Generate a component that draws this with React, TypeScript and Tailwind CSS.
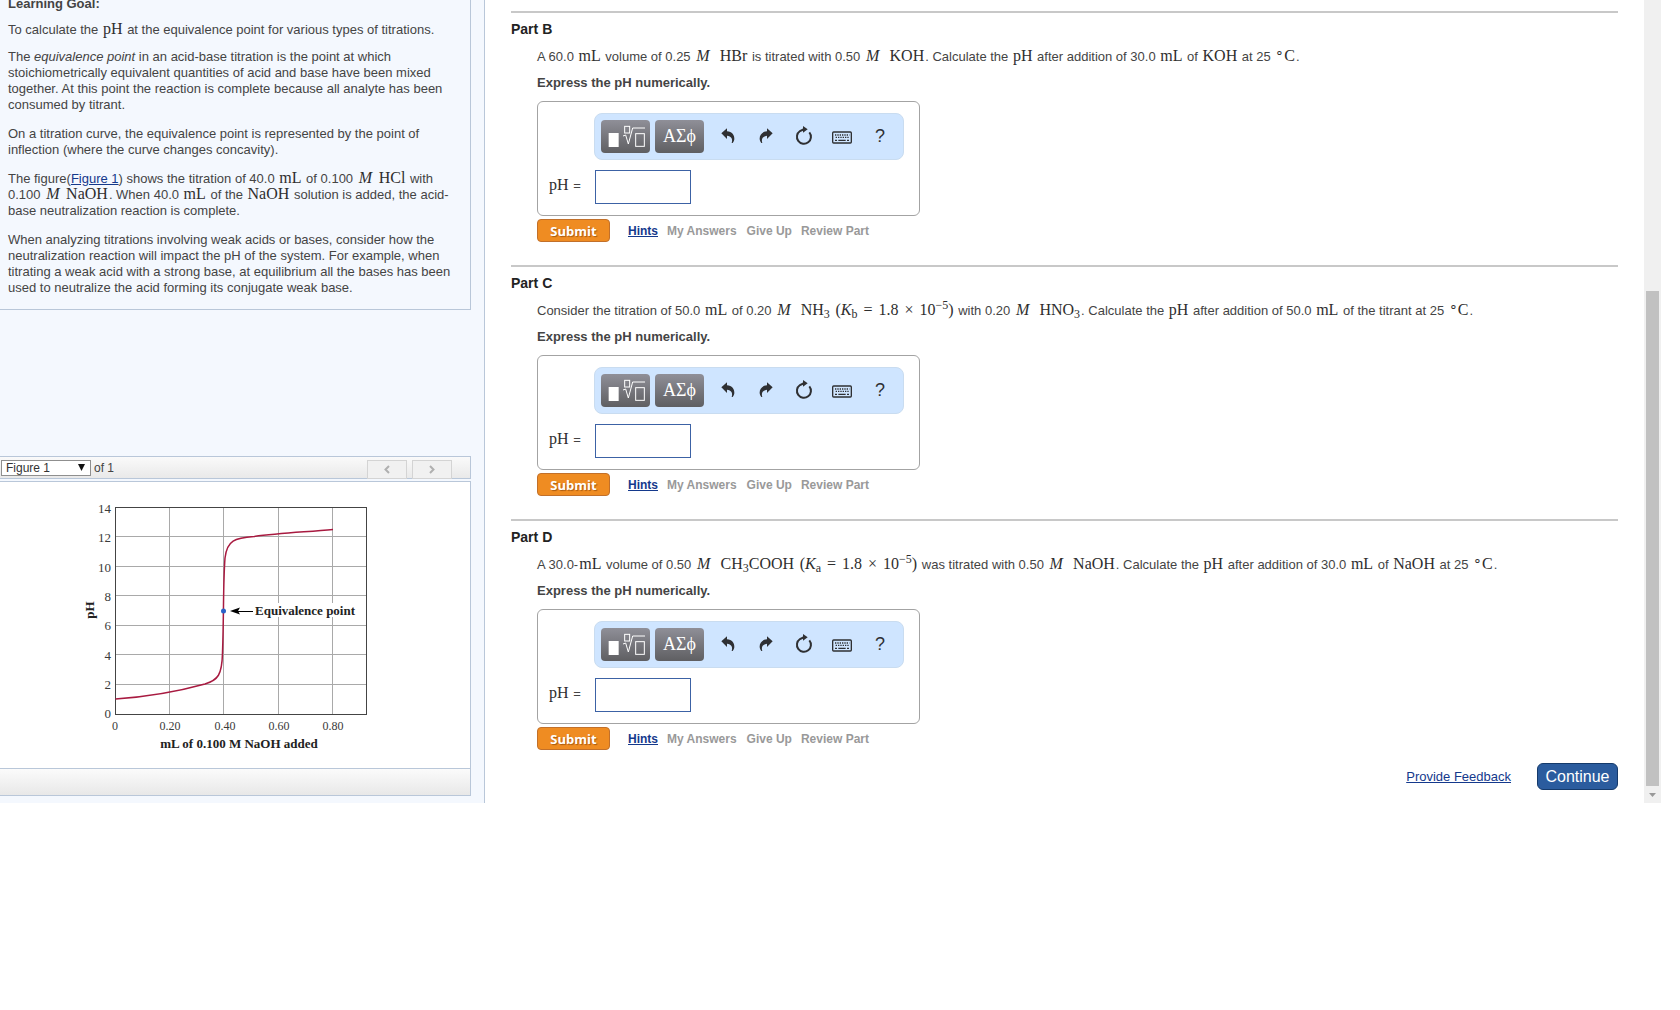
import React from "react";

type Kids = { children: React.ReactNode };

const M = ({ children }: Kids) => (
  <span className="mx-px font-['Liberation_Serif',serif] text-[16px] leading-3 text-[#2e2e2e]">{children}</span>
);
const I = ({ children }: Kids) => (
  <i className="mx-[2px] font-['Liberation_Serif',serif] text-[16px] leading-3 text-[#2e2e2e]">{children}</i>
);
const Sub = ({ children }: Kids) => (
  <sub className="bottom-[-3px] text-[12px] leading-none">{children}</sub>
);
const Sup = ({ children }: Kids) => (
  <sup className="top-[-6px] text-[12px] leading-none">{children}</sup>
);
const Op = ({ children }: Kids) => <span className="mx-[2px]">{children}</span>;
const Celsius = () => (
  <M>
    <sup className="top-[-4px] text-[14px] leading-none">∘</sup>C
  </M>
);

const TemplateIcon = () => (
  <svg width="38" height="24" viewBox="0 0 114 72" fill="none" stroke="#fff" strokeWidth="3" aria-hidden="true">
    <rect x="5" y="27" width="30" height="42" fill="#fff" stroke="none" />
    <rect x="53" y="7" width="15" height="20" />
    <path d="M48 36l8-3 8 27 13-48h37" />
    <rect x="86" y="29" width="26" height="38" />
  </svg>
);
const UndoIcon = () => (
  <svg width="14" height="16" viewBox="0 0 42 48" fill="#2f3033" aria-hidden="true">
    <path d="M1 16L18 1v9c15 1 23 12 22 24-1 5-3 9-5 11h-3c4-12-1-21-14-22v10z" />
  </svg>
);
const RedoIcon = () => (
  <svg width="14" height="16" viewBox="0 0 42 48" fill="#2f3033" aria-hidden="true">
    <path d="M41 16L24 1v9C9 11 1 22 2 34c1 5 3 9 5 11h3C6 33 11 24 24 23v10z" />
  </svg>
);
const ResetIcon = () => (
  <svg width="18" height="20" viewBox="0 0 54 60" aria-hidden="true">
    <path d="M43 19A21 21 0 1 1 15 15L28 9" fill="none" stroke="#2f3033" strokeWidth="6" />
    <path d="M24 0l14 10-14 10z" fill="#2f3033" />
  </svg>
);
const KeyboardIcon = () => (
  <svg width="20" height="13" viewBox="0 0 60 39" fill="none" stroke="#2f3033" className="mt-[4px]" aria-hidden="true">
    <rect x="2" y="3" width="56" height="33" rx="3" strokeWidth="4" />
    <path d="M9 12h43M11 19h40" strokeWidth="4" strokeDasharray="4 3" />
    <path d="M9 28h6M19 28h22M45 28h6" strokeWidth="4" />
  </svg>
);

const Tool = ({ label, children }: Kids & { label: string }) => (
  <button type="button" aria-label={label} className="flex h-full w-[38px] items-center justify-center pb-[2px]">
    {children}
  </button>
);
const DarkTool = ({ label, children }: Kids & { label: string }) => (
  <button
    type="button"
    aria-label={label}
    className="flex h-[33px] w-[49px] items-center justify-center rounded bg-linear-to-b from-[#8f8f98] to-[#5f5f62] pb-[2px] font-['Liberation_Serif',serif] text-[18px] text-white"
  >
    {children}
  </button>
);

function Part({ id, children }: Kids & { id: string }) {
  const field = "answer-" + id;
  return (
    <section className="mb-[23px] border-t-2 border-[#c8c8c8]">
      <h2 className="mt-[8px] text-[14px] leading-4 font-bold text-[#222]">Part {id}</h2>
      <div className="pl-[26px]">
        <p className="mt-[12px] h-4 whitespace-nowrap">{children}</p>
        <p className="mt-[10px] font-bold">Express the pH numerically.</p>
        <div className="mt-[10px] w-[383px] rounded-md border border-[#a3a3a3] pt-[11px] pb-[11px] pl-[56px]">
          <div role="toolbar" className="flex h-[47px] w-[310px] items-center rounded-lg border border-[#c9dcf0] bg-[#cfe5ff] pl-[6px]">
            <div className="flex gap-[5px] pr-[5px]">
              <DarkTool label="Templates">
                <TemplateIcon />
              </DarkTool>
              <DarkTool label="Symbols">ΑΣϕ</DarkTool>
            </div>
            <Tool label="Undo"><UndoIcon /></Tool>
            <Tool label="Redo"><RedoIcon /></Tool>
            <Tool label="Reset"><ResetIcon /></Tool>
            <Tool label="Keyboard"><KeyboardIcon /></Tool>
            <Tool label="Help"><span className="text-[18px] text-[#2f3033]">?</span></Tool>
          </div>
          <div className="-ml-[46px] mt-[10px] flex items-center">
            <label htmlFor={field} className="w-[47px] pb-[3px]">
              <M>pH</M> =
            </label>
            <input id={field} type="text" className="h-[34px] w-[96px] border border-[#3c62a5] bg-white px-2 text-[14px]" />
          </div>
        </div>
        <div className="mt-[3px] flex items-center text-[12px] font-bold text-[#999]">
          <button
            type="button"
            className="h-[23px] w-[73px] rounded border border-[#c2702a] bg-[#ef8c22] font-['Open_Sans',sans-serif] text-[13px] font-bold text-white [text-shadow:1px_1px_1px_#a85a10]"
          >
            Submit
          </button>
          <a href="#hints" className="ml-[18px] text-[#14398c] underline">Hints</a>
          <span className="ml-[9px]">My Answers</span>
          <span className="ml-[10px]">Give Up</span>
          <span className="ml-[9px]">Review Part</span>
        </div>
      </div>
    </section>
  );
}

const xs = [169.5, 223.5, 278.5, 332.5];
const ys = [536.5, 566.5, 595.5, 625.5, 654.5, 684.5];
const yLabels: [string, number][] = [["14", 513], ["12", 542], ["10", 572], ["8", 601], ["6", 630], ["4", 660], ["2", 689], ["0", 718]];
const xLabels: [string, number][] = [["0", 115], ["0.20", 170], ["0.40", 225], ["0.60", 279], ["0.80", 333]];

const Chart = () => (
  <svg width="300" height="264" viewBox="76 492 300 264" role="img" aria-label="Titration curve" className="font-['Liberation_Serif',serif]" fill="#3a3a3a">
    <g stroke="#a9a9a9">
      {xs.map((x) => <path key={x} d={`M${x} 508V714`} />)}
      {ys.map((y) => <path key={y} d={`M116 ${y}H366`} />)}
    </g>
    <rect x="115.5" y="507.5" width="251" height="207" fill="none" stroke="#444" />
    <path d="M278.500 603v14M332.500 603v14" stroke="#fff" strokeWidth="3" />
    <path d="M115.500 699C145 697 176 692 205 684C218 680 222 675 222.500 653C224 610 223 585 225 558C227 540 235 538 254 536.500C280 533 306 532 333 529.500" fill="none" stroke="#a81a40" strokeWidth="1.500" />
    <circle cx="223.500" cy="611" r="2.500" fill="#2a62c8" />
    <path d="M230 611l10-3.500-2 3.500 2 3.500z" fill="#000" />
    <path d="M237 611.500h16" stroke="#000" />
    <g fontSize="13">
      {yLabels.map(([t, y]) => <text key={t} x="111" y={y} textAnchor="end">{t}</text>)}
      {xLabels.map(([t, x]) => <text key={t} x={x} y="730" fontSize="12" textAnchor="middle">{t}</text>)}
    </g>
    <g fontWeight="bold" fill="#222" fontSize="13">
      <text x="255" y="615">Equivalence point</text>
      <text x="239" y="748" textAnchor="middle">mL of 0.100 M NaOH added</text>
      <text transform="translate(94 610) rotate(-90)" textAnchor="middle">pH</text>
    </g>
  </svg>
);

const NavButton = ({ label, d }: { label: string; d: string }) => (
  <button type="button" aria-label={label} className="flex h-[19px] w-[40px] items-center justify-center border border-[#d4d4d4] bg-[#f1f1f1]">
    <svg width="6" height="9" viewBox="0 0 6 9" fill="none" stroke="#b0b0b0" strokeWidth="2" aria-hidden="true">
      <path d={d} />
    </svg>
  </button>
);

export default function App() {
  return (
    <div className="min-h-screen overflow-hidden bg-white font-['Liberation_Sans',Arial,sans-serif] text-[13px] leading-4 text-[#444]">
      <div className="mr-[19px] flex">
        <aside className="w-[485px] shrink-0 border-r border-[#b9c7d9] bg-[#f4f8fe] pr-[13px] pb-[7px]">
          <div className="-mt-1 h-[314px] border-r border-b border-[#b9c7d9] pl-2 whitespace-nowrap">
            <h1 className="font-bold">Learning Goal:</h1>
            <p className="mt-[10px]">To calculate the <M>pH</M> at the equivalence point for various types of titrations.</p>
            <p className="mt-[11px]">
              The <i>equivalence point</i> in an acid-base titration is the point at which<br />
              stoichiometrically equivalent quantities of acid and base have been mixed<br />
              together. At this point the reaction is complete because all analyte has been<br />
              consumed by titrant.
            </p>
            <p className="mt-[13px]">
              On a titration curve, the equivalence point is represented by the point of<br />
              inflection (where the curve changes concavity).
            </p>
            <p className="mt-[13px]">
              The figure(<a href="#figure" className="text-[#14398c] underline">Figure 1</a>) shows the titration of 40.0 <M>mL</M> of 0.100 <I>M</I> <M>HCl</M> with<br />
              0.100 <I>M</I> <M>NaOH</M>. When 40.0 <M>mL</M> of the <M>NaOH</M> solution is added, the acid-<br />
              base neutralization reaction is complete.
            </p>
            <p className="mt-[13px]">
              When analyzing titrations involving weak acids or bases, consider how the<br />
              neutralization reaction will impact the pH of the system. For example, when<br />
              titrating a weak acid with a strong base, at equilibrium all the bases has been<br />
              used to neutralize the acid forming its conjugate weak base.
            </p>
          </div>
          <div className="mt-[146px] flex h-[23px] items-center border-y border-r border-[#b9c7d9] bg-linear-to-b from-[#fafafa] to-[#e9e9e9] pr-[18px] pl-px">
            <div className="relative">
              <select aria-label="Figure" className="block h-4 w-[90px] appearance-none border border-[#8f8f8f] bg-white pl-1 text-[12px] leading-[14px] text-[#333]">
                <option>Figure 1</option>
              </select>
              <svg width="7" height="7" viewBox="0 0 7 7" className="pointer-events-none absolute top-1 right-1.5" aria-hidden="true">
                <path d="M0 0h7L3.500 7z" fill="#111" />
              </svg>
            </div>
            <span className="ml-[3px] text-[12px]">of 1</span>
            <div className="mt-[3px] ml-auto flex gap-[5px]">
              <NavButton label="Previous figure" d="M5 1L1.500 4.500L5 8" />
              <NavButton label="Next figure" d="M1 1L4.500 4.500L1 8" />
            </div>
          </div>
          <div className="mt-[2px] border border-l-0 border-[#b9c7d9] bg-white">
            <div className="h-[286px] pt-[10px] pl-[76px]">
              <Chart />
            </div>
            <div className="h-[27px] border-t border-[#b9c7d9] bg-linear-to-b from-[#fbfbfb] to-[#e8e8e8]" />
          </div>
        </aside>
        <main className="min-w-0 flex-1 px-[26px] pt-[11px]">
          <Part id="B">
            A 60.0 <M>mL</M> volume of 0.25 <I>M</I>&nbsp; <M>HBr</M> is titrated with 0.50 <I>M</I>&nbsp; <M>KOH</M>. Calculate the <M>pH</M> after addition of 30.0 <M>mL</M> of <M>KOH</M> at 25 <Celsius />.
          </Part>
          <Part id="C">
            Consider the titration of 50.0 <M>mL</M> of 0.20 <I>M</I>&nbsp; <M>NH<Sub>3</Sub></M> <M>(<i>K</i><Sub>b</Sub> <Op>=</Op> 1.8 <Op>×</Op> 10<Sup>−5</Sup>)</M> with 0.20 <I>M</I>&nbsp; <M>HNO<Sub>3</Sub></M>. Calculate the <M>pH</M> after addition of 50.0 <M>mL</M> of the titrant at 25 <Celsius />.
          </Part>
          <Part id="D">
            A 30.0-<M>mL</M> volume of 0.50 <I>M</I>&nbsp; <M>CH<Sub>3</Sub>COOH</M> <M>(<i>K</i><Sub>a</Sub> <Op>=</Op> 1.8 <Op>×</Op> 10<Sup>−5</Sup>)</M> was titrated with 0.50 <I>M</I>&nbsp; <M>NaOH</M>. Calculate the <M>pH</M> after addition of 30.0 <M>mL</M> of <M>NaOH</M> at 25 <Celsius />.
          </Part>
          <div className="-mt-[10px] flex items-center justify-end gap-[26px]">
            <a href="#feedback" className="text-[#14398c] underline">Provide Feedback</a>
            <button type="button" className="h-[27px] w-[81px] rounded-md border border-[#153a6b] bg-[#2b5c9e] text-[16px] text-white">Continue</button>
          </div>
        </main>
        <div className="flex w-[17px] shrink-0 flex-col items-center bg-[#f0f0f0]" aria-hidden="true">
          <div className="mt-[291px] w-[13px] flex-1 bg-[#c1c1c1]" />
          <div className="flex h-[17px] items-center">
            <svg width="7" height="4" viewBox="0 0 7 4"><path d="M0 0h7L3.500 4z" fill="#999" /></svg>
          </div>
        </div>
      </div>
    </div>
  );
}
